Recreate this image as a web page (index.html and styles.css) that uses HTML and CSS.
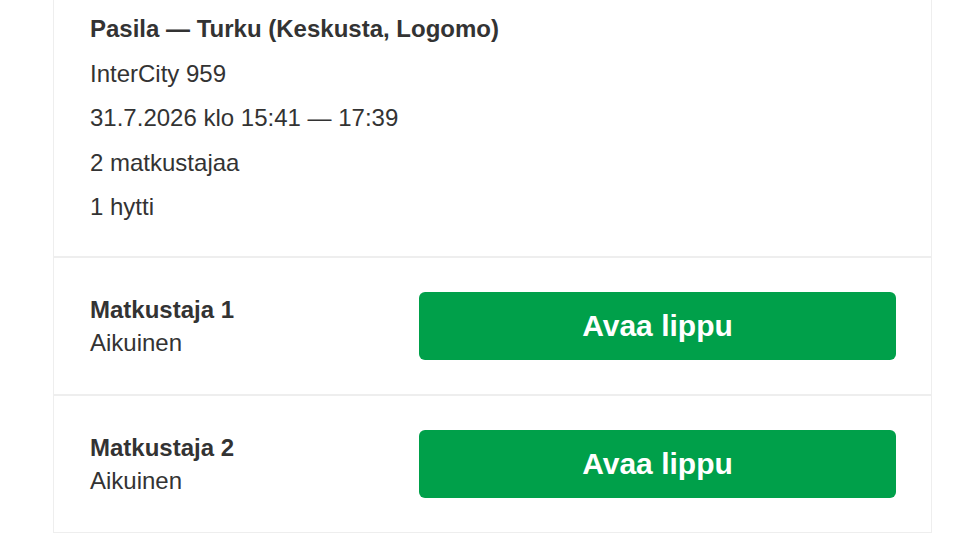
FILE: index.html
```html
<!DOCTYPE html>
<html lang="fi">
  <head>
    <meta charset="UTF-8" />
    <meta name="viewport" content="width=device-width, initial-scale=1.0" />
    <title>Liput</title>
    <link rel="stylesheet" href="styles.css">
  </head>
  <body>
    <div class="ticket-card">
      <div class="trip-info">
        <p class="route">Pasila — Turku (Keskusta, Logomo)</p>
        <p>InterCity 959</p>
        <p>31.7.2026 klo 15:41 — 17:39</p>
        <p>2 matkustajaa</p>
        <p>1 hytti</p>
      </div>
      <div class="passenger">
        <div class="passenger-name">
          <h3>Matkustaja 1</h3>
          <span>Aikuinen</span>
        </div>
        <a class="open-ticket" href="">Avaa lippu</a>
      </div>
      <div class="passenger">
        <div class="passenger-name">
          <h3>Matkustaja 2</h3>
          <span>Aikuinen</span>
        </div>
        <a class="open-ticket" href="">Avaa lippu</a>
      </div>
    </div>
  </body>
</html>
```

FILE: styles.css
```css
:root {
  --text-clr: #333;
  --line-clr: #eeeeee;
  --green: #00a04a;
}
body {
  margin: 0;
  background-color: white;
  font-family: "Liberation Sans", Arial, sans-serif;
  color: var(--text-clr);
}
.ticket-card {
  margin: 0 28px 0 53px;
  border: 1px solid var(--line-clr);
  border-top: none;
  background-color: white;
}
.trip-info {
  padding: 7px 36px 26px;
  border-bottom: 2px solid var(--line-clr);
  p {
    margin: 0;
    font-size: 24px;
    line-height: 44.5px;
  }
  .route {
    font-weight: bold;
  }
}
.passenger {
  display: grid;
  grid-template-columns: 1fr 477px;
  align-items: center;
  padding: 34px 35px 34px 36px;
  & + .passenger {
    border-top: 2px solid var(--line-clr);
  }
  h3 {
    margin: 0;
    font-size: 24px;
    line-height: 33px;
  }
  span {
    font-size: 24px;
    line-height: 33px;
  }
}
.open-ticket {
  display: grid;
  place-content: center;
  height: 68px;
  border-radius: 6px;
  background-color: var(--green);
  color: white;
  font-size: 30px;
  font-weight: bold;
  text-decoration: none;
}
```
